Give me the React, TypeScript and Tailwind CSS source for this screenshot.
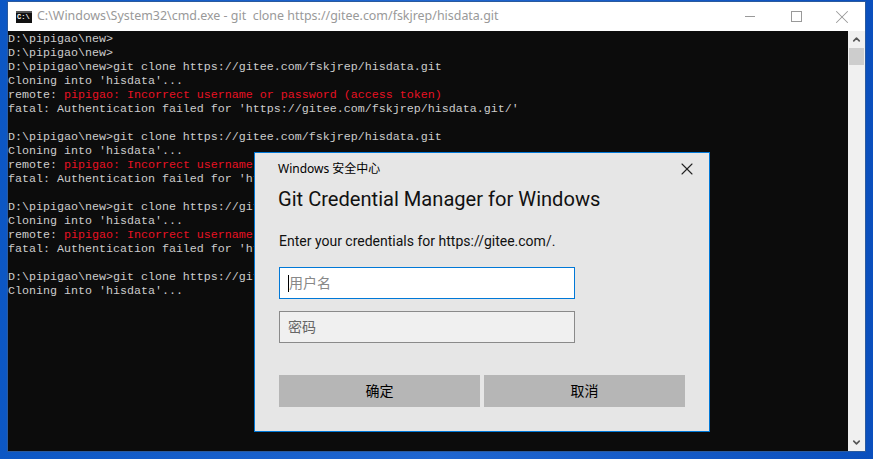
import React from 'react';
import { X, ChevronUp, ChevronDown } from 'lucide-react';

const uiFont = "font-['Noto_Sans','Noto_Sans_CJK_SC',sans-serif]";
const dialogFont = "font-['Roboto','Noto_Sans_CJK_SC',sans-serif]";

const ERR = 'pipigao: Incorrect username or password (access token)';
const FAIL = "fatal: Authentication failed for 'https://gitee.com/fskjrep/hisdata.git/'";
const CLONE = 'D:\\pipigao\\new>git clone https://gitee.com/fskjrep/hisdata.git';
const CLONING = "Cloning into 'hisdata'...";

const Attempt = () => (
  <>
    <div>{CLONE}</div>
    <div>{CLONING}</div>
    <div>
      remote: <span className="text-[#e81123]">{ERR}</span>
    </div>
    <div>{FAIL}</div>
    <div>&nbsp;</div>
  </>
);

const Dialog = () => (
  <div className={`absolute left-[246px] top-[121px] w-[456px] h-[280px] bg-[#e6e6e6] border border-[#0078d7] text-black ${dialogFont}`}>
    <div className="flex items-center justify-between pl-[23px] pr-[12px] pt-[2px] h-[29px]">
      <span className={`text-[12px] leading-[20px] ${uiFont}`}>Windows 安全中心</span>
      <X className="w-[20px] h-[20px] text-[#222]" strokeWidth={1.3} />
    </div>
    <h1 className="pl-[23px] mt-[3px] text-[20.1px] leading-[28px] font-normal text-[#111]">Git Credential Manager for Windows</h1>
    <p className="pl-[24px] mt-[18px] text-[14px] leading-[20px] text-[#111]">Enter your credentials for https://gitee.com/.</p>
    <div className="pl-[24px] mt-[16px] flex flex-col gap-[12px]">
      <div className="w-[296px] h-[32px] bg-white border border-[#0078d7] pl-[8px] flex items-center text-[14px] text-[#888]">
        <span className="w-px h-[17px] bg-black" />
        用户名
      </div>
      <div className="w-[296px] h-[32px] bg-[#f0f0f0] border border-[#8a8a8a] pl-[8px] flex items-center text-[14px] text-[#666]">
        密码
      </div>
    </div>
    <div className="pl-[24px] mt-[32px] flex gap-[4px]">
      <button className="w-[201px] h-[32px] bg-[#b6b6b6] text-[14px] text-black">确定</button>
      <button className="w-[201px] h-[32px] bg-[#b6b6b6] text-[14px] text-black">取消</button>
    </div>
  </div>
);

export default function App() {
  return (
    <div className="w-[873px] h-[459px] overflow-hidden bg-gradient-to-r from-[#0c57c4] via-[#1f66d0] to-[#0a4fbd] pt-[1px] px-[7px] pb-[7px]">
      <div className="h-full flex flex-col border border-[#2a5a9e] bg-white">
        {/* title bar */}
        <div className={`h-[29px] shrink-0 flex items-center pl-[8px] bg-white ${uiFont}`}>
          <div className="w-[16px] h-[12px] bg-[#111] border-t-2 border-[#555] flex items-center justify-start pl-px shrink-0">
            <span className="font-['Liberation_Mono',monospace] text-[7px] leading-[7px] text-white font-bold">C:\</span>
          </div>
          <span className="ml-[5px] text-[12.45px] text-[#999] whitespace-pre">C:\Windows\System32\cmd.exe - git  clone https://gitee.com/fskjrep/hisdata.git</span>
          <div className="ml-auto flex items-center text-[#999]">
            <div className="w-[46px] flex justify-center"><div className="w-[10px] h-px bg-[#999]" /></div>
            <div className="w-[46px] flex justify-center"><div className="w-[11px] h-[11px] border border-[#999]" /></div>
            <div className="w-[46px] flex justify-center"><X className="w-[22px] h-[22px]" strokeWidth={1.1} /></div>
          </div>
        </div>

        <div className="relative flex-1 flex min-h-0">
          {/* console */}
          <div className="flex-1 pt-px bg-[#0c0c0c] text-[#cccccc] font-['Liberation_Mono',monospace] text-[11.67px] leading-[14px] whitespace-pre overflow-hidden">
            <div>D:\pipigao\new&gt;</div>
            <div>D:\pipigao\new&gt;</div>
            <Attempt />
            <Attempt />
            <Attempt />
            <div>{CLONE}</div>
            <div>{CLONING}</div>
          </div>

          {/* scrollbar */}
          <div className="w-[17px] shrink-0 bg-[#f0f0f0] flex flex-col items-center">
            <div className="h-[17px] flex items-center justify-center">
              <ChevronUp className="w-[11px] h-[11px] text-[#555]" strokeWidth={3.5} />
            </div>
            <div className="w-[15px] h-[17px] bg-[#cdcdcd]" />
            <div className="mt-auto h-[17px] flex items-center justify-center">
              <ChevronDown className="w-[11px] h-[11px] text-[#555]" strokeWidth={3.5} />
            </div>
          </div>

          <Dialog />
        </div>
      </div>
    </div>
  );
}
